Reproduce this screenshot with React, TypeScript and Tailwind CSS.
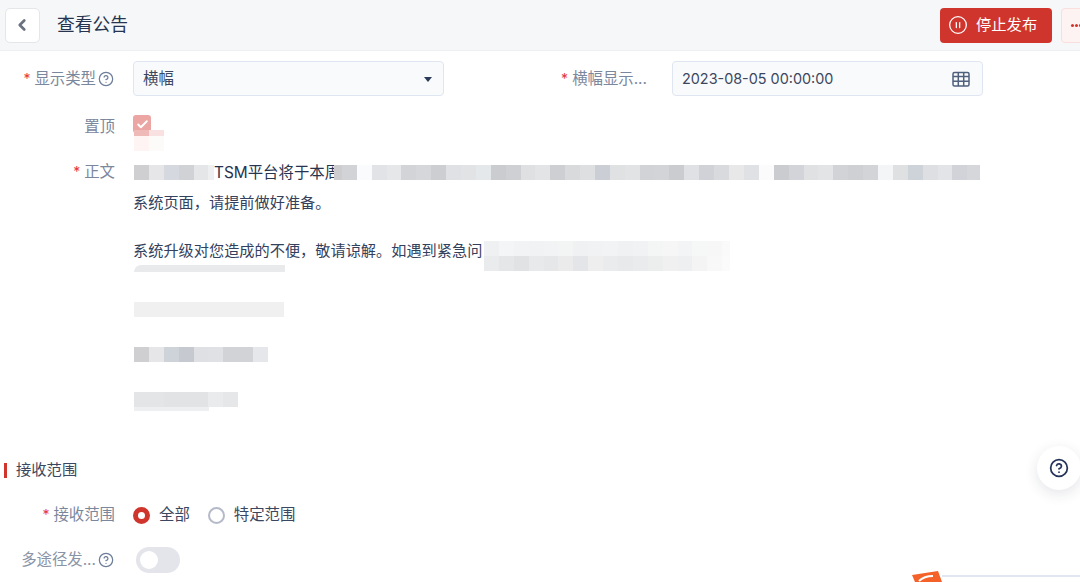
import { ChevronLeft, Check, CircleHelp, CirclePause } from "lucide-react";

const font = "font-['Inter','Noto_Sans_CJK_SC',sans-serif]";

function Tiles({ colors, h = "h-[15px]" }: { colors: string[]; h?: string }) {
  return (
    <div className={`flex shrink-0 ${h}`}>
      {colors.map((c, i) => (
        <div key={i} className="w-[14.9px] h-full shrink-0" style={{ background: c }} />
      ))}
    </div>
  );
}

function Req() {
  return <span className="text-[#e5343a] mr-1 text-[14px]">*</span>;
}

function Help() {
  return <CircleHelp className="w-[16px] h-[16px] ml-[2px] text-[#6e7d99] shrink-0" strokeWidth={1.9} />;
}

function GridCalendar() {
  return (
    <svg width="18" height="16" viewBox="0 0 18 16" fill="none" stroke="#4f5f7c" strokeWidth="1.5">
      <rect x="1" y="1.5" width="16" height="13.5" rx="1.5" />
      <path d="M1 5.5 H17 M1 10.2 H17 M6.3 1 V15 M11.7 1 V15" />
    </svg>
  );
}

const rowA = ["#cfcfd2", "#e6e6e8", "#d5d9df", "#d0d2d6", "#e5e6e8", "#eeeff0"];
const rowB = ["#cdcdd0", "#d2d3d6", "#fafbfc", "#e2e3e6", "#e6e7e9", "#d3d4d7", "#d6d7da", "#cdced1", "#e0e1e4", "#e2e3e5", "#e4e8ea", "#cbccd0", "#cfd0d4", "#dfe0e2", "#e3e4e6", "#cecfd2", "#d9dadc", "#dedfe1", "#cbced4", "#e0e1e3", "#e2e3e5", "#d2d3d6", "#d3d4d7", "#cbccd0", "#e0e1e4", "#d0d2d7", "#d8dade", "#e8e8e8", "#dfe1e5", "#fbfbfc", "#cbccd0", "#d2d4da", "#e0e1e3", "#e3e4e6", "#d2d3d6", "#cfd0d3", "#d3d4d7", "#f4f5f6", "#dfe0e2", "#ced3da", "#dedfe2", "#e2e4e7", "#d2d3d8", "#d6d7da"];
const rowC1 = ["#eff0f1", "#f4f5f6", "#f2f3f4", "#f1f2f3", "#f2f3f4", "#f3f4f4", "#f0f1f3", "#f1f2f3", "#f2f3f4", "#f0f1f2", "#f1f2f3", "#f4f5f5", "#f6f6f6", "#f3f4f5", "#f6f7f7", "#f7f7f8", "#fafafa"];
const rowC2 = ["#eaebec", "#e5e6e8", "#e1e2e4", "#e8e9eb", "#e6e7e9", "#ebebec", "#e4e5e8", "#eeeeef", "#eaebed", "#e8e9ea", "#eaebec", "#eceded", "#f0f0f1", "#eeeff0", "#f4f4f5", "#f8f8f9", "#fbfbfb"];
const rowD = ["#cfcfd1", "#e6e6e8", "#ced2d9", "#c6cad0", "#dfe0e3", "#e0e1e4", "#d2d3d6", "#d2d3d6", "#e6e7ea"];
const rowE = ["#e4e5e7", "#e4e5e7", "#e2e3e5", "#e2e3e5", "#e2e3e5", "#eaebed", "#e6e7e9"];

export default function App() {
  return (
    <div className={`${font} relative w-[1080px] h-[582px] overflow-hidden bg-white text-[15.4px] text-[#33415c]`}>
      <header className="h-[51px] bg-[#f6f7f9] border-b border-[#eff0f3] flex items-center pl-[5px]">
        <button className="w-[35px] h-[35px] bg-white border border-[#e4e6ea] rounded-[5px] flex items-center justify-center pr-[2px]">
          <ChevronLeft className="w-[18px] h-[18px] text-[#6a7280]" strokeWidth={3.6} />
        </button>
        <h1 className="ml-[17px] text-[17.8px] text-[#27344f] font-normal">查看公告</h1>
        <div className="ml-auto flex gap-[9px] items-center -mr-[30px]">
          <button className="w-[112px] h-[35px] rounded-[4px] bg-[#d0352d] text-white flex items-center justify-start pl-[8px] gap-[8px] text-[15.3px]">
            <CirclePause className="w-[20px] h-[20px]" strokeWidth={1.5} />
            停止发布
          </button>
          <button className="w-[49px] h-[35px] rounded-[4px] bg-[#fdf3f2] border border-[#f8dfdd] flex items-center justify-start pl-[9px] overflow-hidden">
            <span className="flex gap-[1px]">
              <span className="w-[3px] h-[3px] rounded-full bg-[#d0352d]" />
              <span className="w-[3px] h-[3px] rounded-full bg-[#d0352d]" />
              <span className="w-[3px] h-[3px] rounded-full bg-[#d0352d]" />
            </span>
          </button>
        </div>
      </header>

      <main className="flex flex-col">
        <div className="flex items-center mt-[10px] h-[35px]">
          <div className="w-[115px] pr-[1px] flex items-center justify-end text-[#7b879c] pt-[1px]">
            <Req />
            显示类型
            <Help />
          </div>
          <div className="ml-[18px] w-[311px] h-[35px] rounded-[4px] border border-[#dfe6f1] bg-[#f9fafc] flex items-center justify-between pl-[9px] pr-[11px] pt-[1px] text-[#3b4760]">
            横幅
            <span className="w-0 h-0 border-x-[4.5px] border-x-transparent border-t-[5px] border-t-[#2b3a58]" />
          </div>
          <div className="w-[203px] flex items-center justify-end text-[#7b879c] pt-[1px]">
            <Req />
            横幅显示...
          </div>
          <div className="ml-[25px] w-[311px] h-[35px] rounded-[4px] border border-[#dfe6f1] bg-[#f9fafc] flex items-center justify-between pl-[9px] pr-[12px] pt-[1px] text-[#3b4760] text-[14.4px]">
            2023-08-05 00:00:00
            <GridCalendar />
          </div>
        </div>

        <div className="flex items-start mt-[19px] h-[18px] relative">
          <div className="w-[115px] text-right text-[#7b879c]">置顶</div>
          <div className="ml-[18px] w-[18px] h-[18px] rounded-[3px] bg-[#eba5a3] flex items-center justify-center">
            <Check className="w-[13px] h-[13px] text-white" strokeWidth={3.5} />
          </div>
          <div className="absolute left-[134px] top-[15px] flex flex-col">
            <Tiles colors={["#efb9b8", "#f8e1e0"]} h="h-[6px]" />
            <Tiles colors={["#fdf4f3", "#fdfafa"]} h="h-[15px]" />
          </div>
        </div>

        <div className="flex mt-[32px]">
          <div className="w-[115px] text-right text-[#7b879c] leading-[24px] -mt-[5px]">
            <Req />
            正文
          </div>
          <div className="ml-[19px] flex-1 flex flex-col text-[15.2px] text-[#33415c]">
            <div className="flex items-center h-[15px]">
              <div className="w-[80px] shrink-0 overflow-hidden"><Tiles colors={rowA} /></div>
              <span className="w-[120px] shrink-0 bg-white text-[#27344f] text-[15.4px] whitespace-nowrap leading-[15px]">
                TSM平台将于本周
              </span>
              <div className="relative w-[646px] shrink-0 overflow-hidden bg-white">
                <div className="-ml-[7px]"><Tiles colors={rowB} /></div>
              </div>
            </div>
            <div className="mt-[13px] leading-[20px] -ml-[1px]">系统页面，请提前做好准备。</div>
            <div className="mt-[28px] flex">
              <div className="w-[350px] shrink-0 flex flex-col">
                <div className="leading-[20px] whitespace-nowrap -ml-[1px]">系统升级对您造成的不便，敬请谅解。如遇到紧急问</div>
                <div className="mt-[4px] w-[151px] h-[7px] bg-[#e9eaec] rounded-tl-[8px]" />
              </div>
              <div className="w-[246px] overflow-hidden flex flex-col">
                <Tiles colors={rowC1} />
                <Tiles colors={rowC2} />
              </div>
            </div>
            <div className="mt-[30px] w-[150px] h-[15px] bg-[#f0f0f1]" />
            <div className="mt-[30px]"><Tiles colors={rowD} /></div>
            <div className="mt-[30px] flex"><Tiles colors={rowE} /></div>
            <div className="w-[75px] h-[4px] bg-[#eeeff0]" />
          </div>
        </div>

        <div className="mt-[51px] flex items-center h-[16px] pl-[4px]">
          <span className="w-[3px] h-[15px] bg-[#d0352d]" />
          <span className="ml-[9px] text-[#3b4760] text-[15.3px]">接收范围</span>
        </div>

        <div className="mt-[27px] flex items-center h-[20px]">
          <div className="w-[115px] text-right text-[#7b879c]">
            <Req />
            接收范围
          </div>
          <div className="ml-[18px] flex items-center">
            <span className="w-[17px] h-[17px] rounded-full border-[5px] border-[#d0352d] bg-white" />
            <span className="ml-[9px] text-[#3b4760]">全部</span>
            <span className="ml-[18px] w-[17px] h-[17px] rounded-full border-[2px] border-[#b4bac8] bg-white" />
            <span className="ml-[9px] text-[#3b4760]">特定范围</span>
          </div>
        </div>

        <div className="mt-[22px] flex items-center h-[26px]">
          <div className="w-[115px] pr-[1px] flex items-center justify-end text-[#8a94a6]">
            多途径发...
            <Help />
          </div>
          <div className="ml-[21px] w-[44px] h-[26px] rounded-full bg-[#e4e5ea] flex items-center pl-[4px]">
            <span className="w-[18px] h-[18px] rounded-full bg-white" />
          </div>
        </div>
      </main>

      <button className="absolute left-[1037px] top-[446px] w-[44px] h-[44px] rounded-full bg-white shadow-[0_4px_14px_rgba(30,40,70,0.12)] flex items-center justify-center">
        <CircleHelp className="w-[20px] h-[20px] text-[#25345a]" strokeWidth={2.1} />
      </button>

      <div className="absolute left-[942px] top-[575px] w-[138px] h-[7px] border-t-2 border-[#e2e6f0]" />
      <svg className="absolute left-[910px] top-[570px]" width="34" height="12" viewBox="0 0 34 12">
        <path d="M2 5 L28 1 L32 12 L5 12 Z" fill="#f4622a" />
        <path d="M9 11 Q14 6 23 6" stroke="#fff" strokeWidth="2" fill="none" />
      </svg>
    </div>
  );
}
